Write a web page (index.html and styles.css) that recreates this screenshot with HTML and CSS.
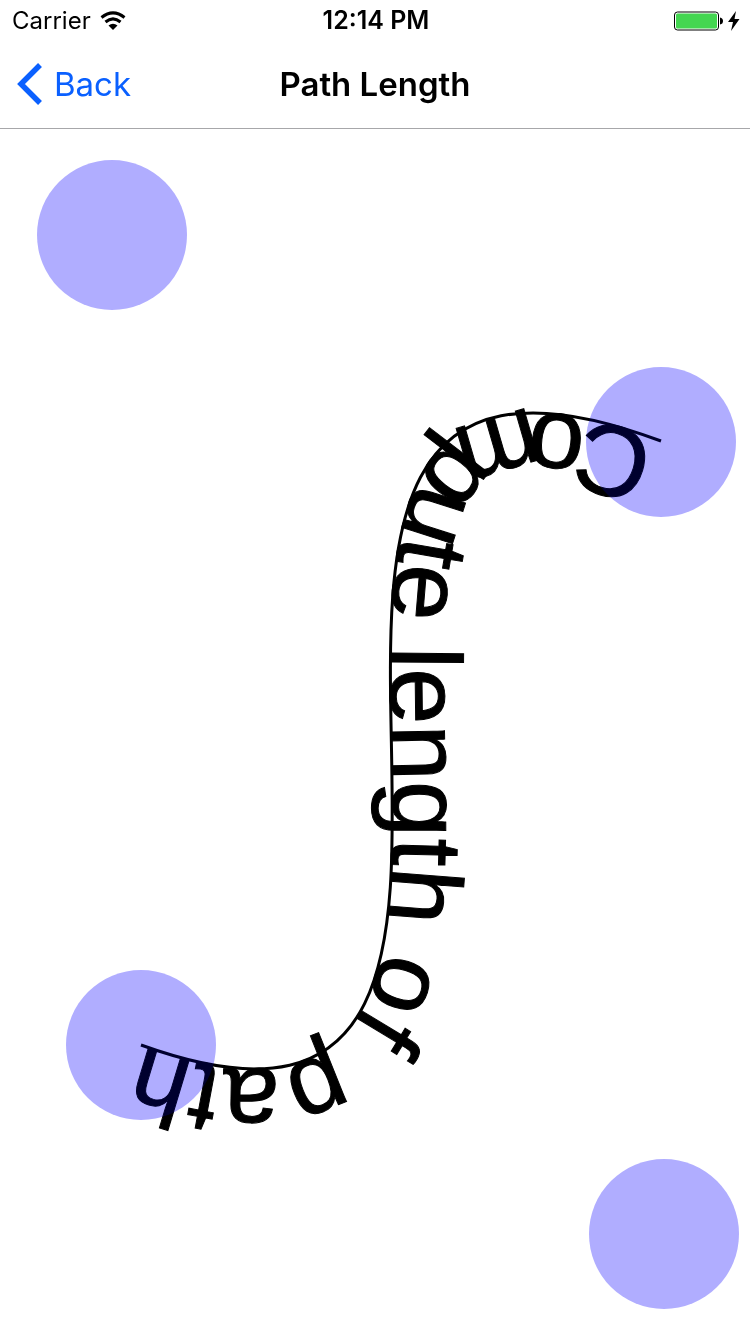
FILE: index.html
```html
<!DOCTYPE html>
<html lang="en">
<head>
<meta charset="utf-8">
<meta name="viewport" content="width=device-width, initial-scale=1">
<title>Path Length</title>
<link rel="stylesheet" href="styles.css">
</head>
<body>
<div class="screen">
  <div class="status">
    <div class="carrier">
      <span>Carrier</span>
      <svg class="wifi" viewBox="0 0 26 20" aria-hidden="true">
        <path d="M1.500 6.500Q13-2.800 24.500 6.500" fill="none" stroke="#000" stroke-width="3"/>
        <path d="M5.500 11Q13 4.700 20.500 11" fill="none" stroke="#000" stroke-width="3"/>
        <path d="M8.500 14.500Q13 11 17.500 14.500L13 19Z"/>
      </svg>
    </div>
    <time class="clock">12:14 PM</time>
    <div class="power">
      <svg class="battery" viewBox="0 0 50 20" aria-hidden="true">
        <rect x=".5" y="1" width="44" height="18" rx="3" fill="#fff" stroke="#000"/>
        <rect x="2" y="2.500" width="41" height="15" rx="1.500" fill="#44d651"/>
        <path d="M46 6.500q3 .5 3 3.500t-3 3.500z"/>
      </svg>
      <svg class="bolt" viewBox="0 0 12 20" aria-hidden="true"><path d="M8 0L0 11h5L3 20 11.500 8H6.500z"/></svg>
    </div>
  </div>
  <header class="nav">
    <button class="back" type="button">
      <svg class="chevron" viewBox="0 0 26 42" aria-hidden="true"><path d="M24 2L5 21l19 19" fill="none" stroke="#0a60ff" stroke-width="5.500"/></svg>
      <span>Back</span>
    </button>
    <h1 class="title">Path Length</h1>
  </header>
  <main class="stage">
    <svg class="drawing" viewBox="0 129 750 1205">
      <defs>
        <path id="curve" d="M661 441C112 235 664 1234 141 1045"/>
        <g id="handles">
          <circle cx="112" cy="235" r="75"/>
          <circle cx="661" cy="442" r="75"/>
          <circle cx="141" cy="1045" r="75"/>
          <circle cx="664" cy="1234" r="75"/>
        </g>
      </defs>
      <use href="#handles" class="handle-fill"/>
      <use href="#curve" class="curve"/>
      <text class="label"><textPath href="#curve" startOffset="4">Compute length of path</textPath></text>
      <use href="#handles" class="handle-tint"/>
    </svg>
  </main>
</div>
</body>
</html>
```
FILE: styles.css
```css
* { box-sizing: border-box; }
body { margin: 0; background: #fff; color: #000; font-family: Inter, sans-serif; }
.screen { min-height: 100vh; display: flex; flex-direction: column; }
.status { height: 41px; padding: 0 10px 0 12px; display: grid; grid-template-columns: 1fr auto 1fr; align-items: center; font-size: 24px; line-height: 41px; }
.carrier { display: flex; align-items: center; gap: 9px; }
.wifi { width: 26px; height: 20px; }
.clock { font-size: 25px; font-weight: 600; }
.power { display: flex; align-items: center; justify-content: flex-end; gap: 4px; }
.battery { width: 50px; height: 20px; }
.bolt { width: 12px; height: 20px; }
.nav { height: 88px; padding: 0 16px 2px; display: grid; grid-template-columns: 1fr auto 1fr; align-items: center; border-bottom: 1px solid #a7a7aa; }
.back { justify-self: start; display: flex; align-items: center; gap: 12px; padding: 0; border: 0; background: none; color: #0a60ff; font: 400 33px/40px Inter, sans-serif; }
.chevron { width: 26px; height: 42px; }
.title { margin: 0; font-size: 33px; line-height: 40px; font-weight: 600; }
.stage { flex: 1; display: flex; }
.drawing { display: block; width: 100%; }
.handle-fill { fill: #b0adff; }
.handle-tint { fill: #00002e; mix-blend-mode: screen; }
.curve { fill: none; stroke: #000; stroke-width: 3px; }
.label { font-family: "Liberation Sans", Arial, sans-serif; font-size: 101px; stroke: #000; stroke-width: 1px; }
```
